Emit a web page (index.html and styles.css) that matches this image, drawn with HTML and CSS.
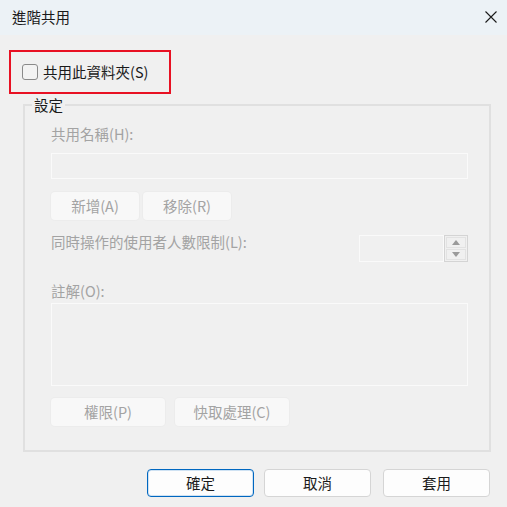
FILE: index.html
```html
<!DOCTYPE html>
<html lang="zh-Hant">
<head>
<meta charset="UTF-8">
<title>進階共用</title>
<link rel="stylesheet" href="styles.css">
</head>
<body>

<div class="dialog">
  <div class="titlebar">
    <span class="title">進階共用</span>
    <svg class="close" width="12" height="12" viewBox="0 0 12 12">
      <path d="M0.5 0.5 L11.5 11.5 M11.5 0.5 L0.5 11.5" stroke="#1a1a1a" stroke-width="1.1" fill="none"/>
    </svg>
  </div>

  <div class="content">
    <div class="highlight">
      <label class="check">
        <span class="box"></span>
        共用此資料夾(S)
      </label>
    </div>

    <fieldset class="group">
      <legend>設定</legend>

      <div class="label">共用名稱(H):</div>
      <div class="field"></div>

      <div class="btn-row">
        <span class="btn small">新增(A)</span>
        <span class="btn small">移除(R)</span>
      </div>

      <div class="limit-row">
        <span class="label">同時操作的使用者人數限制(L):</span>
        <div class="spin">
          <div class="spin-value"></div>
          <div class="spin-buttons">
            <span class="spin-btn"><svg width="8" height="5" viewBox="0 0 8 5"><path d="M0 5 L4 0 L8 5 Z" fill="#9a9a9a"/></svg></span>
            <span class="spin-btn"><svg width="8" height="5" viewBox="0 0 8 5"><path d="M0 0 L4 5 L8 0 Z" fill="#9a9a9a"/></svg></span>
          </div>
        </div>
      </div>

      <div class="label comment-label">註解(O):</div>
      <div class="field area"></div>

      <div class="btn-row bottom-row">
        <span class="btn wide">權限(P)</span>
        <span class="btn wide">快取處理(C)</span>
      </div>
    </fieldset>

    <div class="actions">
      <span class="action default">確定</span>
      <span class="action cancel">取消</span>
      <span class="action">套用</span>
    </div>
  </div>
</div>

</body>
</html>
```

FILE: styles.css
```css
body {
  margin: 0;
  padding: 0;
  background: #f0f0f0;
  font-family: "Noto Sans CJK TC", "Noto Sans", sans-serif;
  font-size: 14px;
  color: #1a1a1a;
}

.dialog {
  width: 507px;
  height: 507px;
  background: #f0f0f0;
}

.titlebar {
  height: 35px;
  background: #ecf2f6;
  display: flex;
  align-items: center;
  justify-content: space-between;
  padding: 0 10px 0 12px;
}

.title {
  font-size: 14.5px;
  line-height: 20px;
  margin-top: -2px;
}

.close {
  margin-top: -2px;
}

.content {
  padding: 15px 0 0 9px;
}

.highlight {
  width: 158px;
  height: 40px;
  border: 2px solid #e81123;
  display: flex;
  align-items: center;
}

.check {
  display: flex;
  align-items: center;
  gap: 5px;
  padding-left: 11px;
  font-size: 14.5px;
  line-height: 20px;
}

.box {
  width: 14px;
  height: 14px;
  border: 1px solid #8a8a8a;
  border-radius: 3px;
  background: #f3f3f3;
}

.group {
  width: 417px;
  height: 342px;
  margin: 2px 0 0 14px;
  padding: 10px 21px 0 26px;
  border: 2px solid #e0e0e0;
  border-radius: 0;
}

.group legend {
  padding: 0 2px;
  margin-left: -19px;
  font-size: 14.5px;
  line-height: 18px;
  color: #1a1a1a;
}

.label {
  color: #a3a3a3;
  font-size: 14.5px;
  line-height: 20px;
}

.field {
  height: 24px;
  margin-top: 9px;
  border: 1px solid #fafafa;
  background: #f0f0f0;
}

.field.area {
  height: 81px;
  margin-top: 2px;
}

.btn-row {
  display: flex;
  gap: 4px;
  margin-top: 13px;
}

.btn-row.bottom-row {
  margin-top: 12px;
}

.btn {
  height: 28px;
  line-height: 28px;
  text-align: center;
  background: #f8f8f8;
  border-radius: 4px;
  color: #a3a3a3;
  font-size: 14.5px;
  box-shadow: 0 0 0 1px #ececec;
}

.btn.small {
  width: 88px;
}

.btn.wide {
  width: 114px;
}

.btn-row .btn.wide + .btn.wide {
  margin-left: 6px;
}

.limit-row {
  display: flex;
  align-items: center;
  justify-content: space-between;
  margin-top: 15px;
}

.limit-row .label {
  margin-top: -13px;
}

.spin {
  display: flex;
  height: 27px;
}

.spin-value {
  width: 83px;
  height: 25px;
  border: 1px solid #fafafa;
}

.spin-buttons {
  display: flex;
  flex-direction: column;
  width: 20px;
  border: 1px solid #d4d4d4;
  padding: 1px;
  gap: 1px;
  height: 23px;
}

.spin-btn {
  flex: 1;
  display: flex;
  align-items: center;
  justify-content: center;
  background: #f0f0f0;
  border: 1px solid #e2e2e2;
}

.comment-label {
  margin-top: 19px;
}

.actions {
  display: flex;
  justify-content: flex-end;
  gap: 10px;
  padding-right: 17px;
  margin-top: 17px;
}

.action {
  width: 105px;
  height: 26px;
  line-height: 26px;
  text-align: center;
  background: #fdfdfd;
  border: 1px solid #d5d5d5;
  border-radius: 4px;
  font-size: 14.5px;
}

.action.cancel {
  margin-right: 2px;
}

.action.default {
  border-color: #0067c0;
  box-shadow: inset 0 0 0 1px #cfe2f3;
}
```
